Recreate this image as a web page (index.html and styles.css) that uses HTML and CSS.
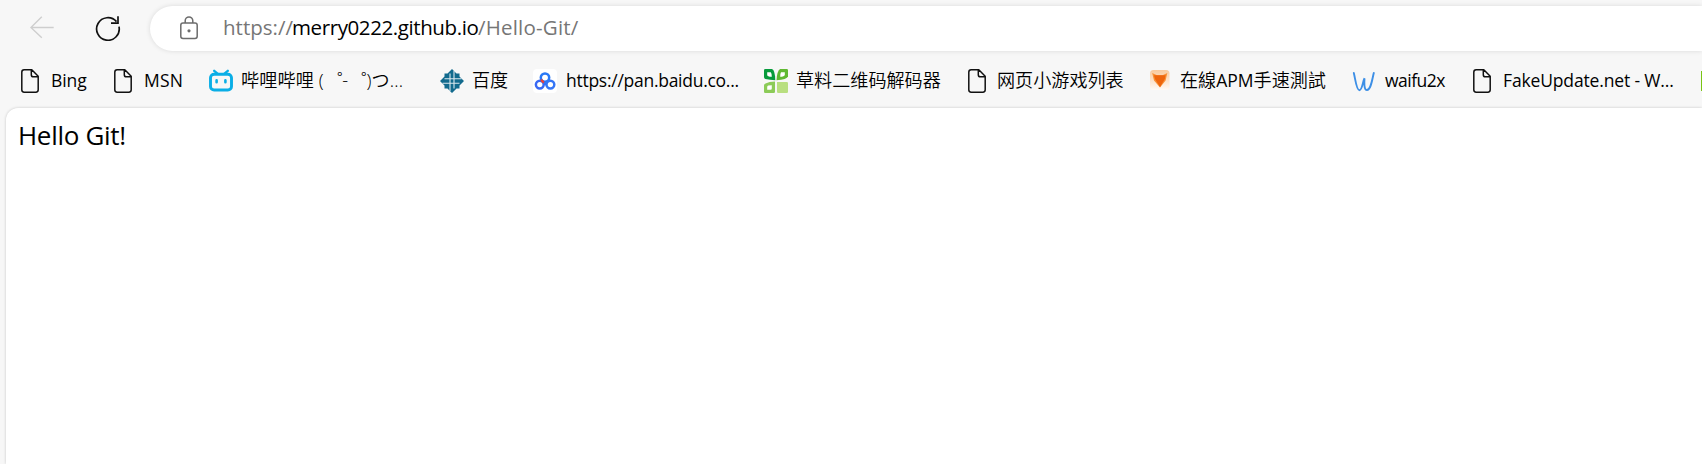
FILE: index.html
```
<!DOCTYPE html>
<html lang="zh-CN">
<head>
<meta charset="utf-8">
<title>Hello Git</title>
<link rel="stylesheet" href="styles.css">
</head>
<body>
<svg width="0" height="0" class="defs">
  <symbol id="page" viewBox="0 0 24 24"><path d="M5.7 .8H13.8L20.2 7.2V20.8Q20.2 23.2 17.8 23.2H6.2Q3.8 23.2 3.8 20.8V3.2Q3.8 .8 6.2 .8ZM13.3 1V5.7Q13.3 7.8 15.4 7.8H20" fill="none" stroke="#111" stroke-width="1.5" stroke-linejoin="round"/></symbol>
</svg>
<header class="toolbar">
  <svg class="back" viewBox="0 0 24 24"><path d="M23.7 12.5H.9M11.8 1.8L.9 12.5L11.8 22.8" fill="none" stroke="#cecece" stroke-width="1.4"/></svg>
  <svg class="reload" viewBox="0 0 26 26"><path d="M24 11.7A11.3 11.3 0 1 1 21.5 6.6M23 1.3V8.1H16" fill="none" stroke="#111" stroke-width="1.7"/></svg>
  <div class="address">
    <svg class="lock" viewBox="0 0 20 24"><rect x="1.8" y="7" width="16.4" height="15.5" rx="2.2" fill="none" stroke="#6c6c6c" stroke-width="1.5"/><path d="M6.2 7V4.7a3.8 3.8 0 0 1 7.6 0V7" fill="none" stroke="#6c6c6c" stroke-width="1.5"/><circle cx="10" cy="14.8" r="1.6" fill="#6c6c6c"/></svg>
    <div class="url"><span class="scheme">https://</span><span class="host">merry0222.github.io</span><span class="path">/Hello-Git/</span></div>
  </div>
</header>
<nav class="bookmarks">
  <div class="bookmark bing"><svg><use href="#page"/></svg><span>Bing</span></div>
  <div class="bookmark msn"><svg><use href="#page"/></svg><span>MSN</span></div>
  <div class="bookmark cjk bili"><svg viewBox="0 0 24 24"><path d="M5.2 1.8L8.5 4.6M18.8 1.8L15.5 4.6" stroke="#0aaee6" stroke-width="2.4" stroke-linecap="round"/><rect x="1.5" y="5.2" width="21" height="15.8" rx="3.6" fill="#f7f7f7" stroke="#0aaee6" stroke-width="2.9"/><path d="M7.6 11.4V13.2M16.4 11.4V13.2" stroke="#0aaee6" stroke-width="2.6" stroke-linecap="round"/></svg><span>哔哩哔哩 (<span class="kana">゜</span>-<span class="kana">゜</span>)つ...</span></div>
  <div class="bookmark cjk baidu"><svg viewBox="0 0 24 24"><path d="M12 0L16.5 4.4H19.5V7.4L24 12L19.5 16.5V19.5H16.5L12 24L7.5 19.5H4.5V16.5L0 12L4.5 7.4V4.4H7.5Z" fill="#126a8d"/><path d="M10 4.5V14.2H2.5M14 19.5V9.8H21.5M4.5 9.8H14V2M19.5 14.2H10V22" fill="none" stroke="#d9e8ee" stroke-width="1.1"/></svg><span>百度</span></div>
  <div class="bookmark pan"><svg viewBox="0 0 24 24"><rect width="24" height="24" rx="4" fill="#fff"/><g fill="none" stroke-width="2.5"><circle cx="12" cy="8.6" r="4.2" stroke="#2878f6"/><circle cx="6.8" cy="15.6" r="3.9" stroke="#3868f4"/><circle cx="17.4" cy="15.6" r="3.9" stroke="#3475f6"/><path d="M8.8 11.5L13 15.8" stroke="#3270f5"/><path d="M8.4 10.5Q9 12.6 11 13.4" stroke="#ee4036"/></g></svg><span>https://pan.baidu.co...</span></div>
  <div class="bookmark cjk cao"><svg viewBox="0 0 24 24"><path d="M1.3 0H8Q11 1 11.3 11.3Q6 11 1.3 10Q0 9.7 0 8V1.3Q0 0 1.3 0Z" fill="#079b3c"/><path d="M16 0H22.7Q24 0 24 1.3V7.5Q23 10.5 12.5 11.3Q13 2 16 0Z" fill="#60b932"/><path d="M1.5 14.5Q5 12.6 11 12.6V22.7Q11 24 9.7 24H1.3Q0 24 0 22.7V16.5Q0 15 1.5 14.5Z" fill="#8ccb58"/><path d="M13 13H22.7Q24 13 24 14.3V22.7Q24 24 22.7 24H14.3Q13 24 13 22.7Z" fill="#b9df80"/><path d="M3.2 3.2H6.8Q7.8 4.6 7.8 7.8Q3.2 7.8 3.2 6ZM17 3.2H20.8V6Q20.2 7.8 16.2 7.8Q16.2 4.5 17 3.2ZM4.4 16.6Q5.5 16.2 7.8 16.2V19.5Q7.8 20.8 6.5 20.8H3.2V18Q3.2 17 4.4 16.6Z" fill="#fff"/></svg><span>草料二维码解码器</span></div>
  <div class="bookmark cjk games"><svg><use href="#page"/></svg><span>网页小游戏列表</span></div>
  <div class="bookmark cjk apm"><svg viewBox="0 0 24 24"><defs><linearGradient id="tile" x2="0" y2="1"><stop stop-color="#f9c99b"/><stop offset="1" stop-color="#fffaf5"/></linearGradient></defs><rect x="2" y="1" width="19.5" height="20" rx="3.5" fill="url(#tile)"/><path d="M4.2 4L9 6.2H14.5L19.3 4L17.6 11.5L12 18.5L6 11.5Z" fill="#f99035"/><path d="M6 6.2H17.6L16.8 10L12 18L7 10Z" fill="#ee650c"/></svg><span>在線<span class="latin">APM</span>手速測試</span></div>
  <div class="bookmark waifu"><svg viewBox="0 0 24 24"><path d="M1.8 4C3.2 9 4.3 21.2 7.4 21.2C10.2 21.2 10.6 13 12.5 9.3C12.2 13 11.8 21 15 21C19 21 20.2 10 21.8 4" fill="none" stroke="#3d8fe6" stroke-width="1.9" stroke-linecap="round"/></svg><span>waifu2x</span></div>
  <div class="bookmark fake"><svg><use href="#page"/></svg><span>FakeUpdate.net - W...</span></div>
  <div class="next"></div>
</nav>
<main class="page">Hello Git!</main>
</body>
</html>
```
FILE: styles.css
```
* { box-sizing: border-box; }
body {
  margin: 0;
  height: 464px;
  overflow: hidden;
  display: flex;
  flex-direction: column;
  background: #f7f7f7;
  color: #000;
  font-family: "Open Sans", "Noto Sans CJK SC", sans-serif;
}
svg { flex: none; display: block; }
.defs { position: absolute; }
.toolbar {
  height: 57px;
  flex: none;
  display: flex;
  align-items: flex-start;
  padding: 6px 0 0 30px;
}
.back { width: 24px; height: 24px; margin-top: 9px; }
.reload { width: 26px; height: 26px; margin: 9px 0 0 41px; }
.address {
  flex: 1;
  height: 45px;
  margin-left: 29px;
  padding-left: 29px;
  display: flex;
  align-items: center;
  background: #fff;
  border-radius: 23px 0 0 23px;
  box-shadow: 0 0 5px rgba(0, 0, 0, .12);
}
.lock { width: 20px; height: 24px; margin-bottom: 1px; }
.url {
  display: flex;
  margin-left: 24px;
  padding-bottom: 2px;
  font-size: 20.5px;
  line-height: 43px;
  white-space: nowrap;
  color: #767676;
}
.scheme { width: 69px; }
.host { width: 186px; color: #000; letter-spacing: -.4px; }
.path { letter-spacing: .2px; }
.bookmarks {
  height: 51px;
  flex: none;
  display: flex;
  padding-left: 18px;
  overflow: hidden;
}
.bookmark {
  flex: none;
  display: flex;
  gap: 9px;
  height: 48px;
  align-items: center;
  font-size: 17.5px;
  white-space: nowrap;
}
.bookmark > span { line-height: 24px; padding-bottom: 2px; }
.bookmark svg { width: 24px; height: 24px; }
.bookmark.cjk { gap: 8px; font-size: 18.1px; font-weight: 350; }
.cjk > span { padding-bottom: 3px; }
.latin { font-size: 17.5px; font-weight: 400; }
.kana { display: inline-block; transform: scaleX(-1); }
.bing { width: 93px; letter-spacing: -.1px; }
.msn { width: 98px; letter-spacing: .2px; }
.bili { width: 231px; letter-spacing: .15px; }
.baidu { width: 93px; }
.pan { width: 231px; letter-spacing: -.27px; }
.cao { width: 201px; }
.games { width: 183px; }
.apm { width: 204px; }
.waifu { width: 118px; letter-spacing: -.5px; }
.fake { width: 231px; letter-spacing: -.15px; }
.next { flex: none; width: 24px; height: 20px; margin-top: 14px; background: #79c414; }
.page {
  flex: 1;
  margin-left: 6px;
  padding: 8px 12px;
  background: #fff;
  border-radius: 12px 0 0 0;
  box-shadow: 0 0 3px rgba(0, 0, 0, .2);
  font-size: 26px;
  line-height: 38px;
  letter-spacing: -.3px;
}
```
